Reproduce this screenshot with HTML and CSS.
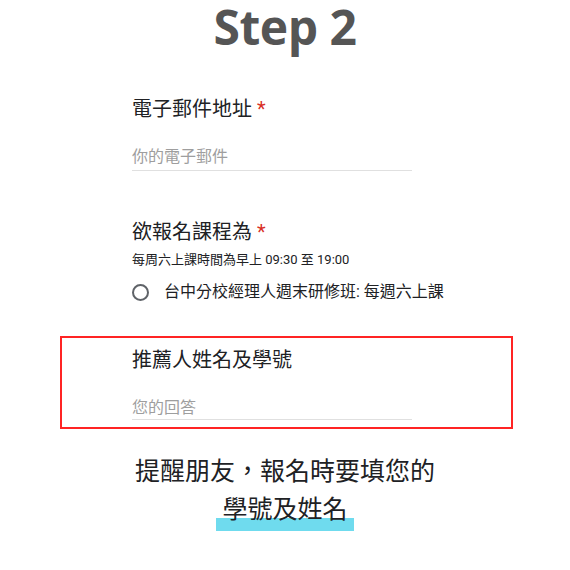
FILE: index.html
```html
<!DOCTYPE html>
<html lang="zh-Hant">
<head>
  <meta charset="UTF-8">
  <meta name="viewport" content="width=device-width, initial-scale=1.0">
  <title>Step 2</title>
  <link rel="stylesheet" href="styles.css">
</head>
<body>
  <h1 class="step">Step 2</h1>

  <div class="form">
    <div class="question q-email">
      <div class="q-title">電子郵件地址 <span class="req">*</span></div>
      <div class="answer">你的電子郵件</div>
    </div>

    <div class="question q-course">
      <div class="q-title">欲報名課程為 <span class="req">*</span></div>
      <div class="q-desc">每周六上課時間為早上 09:30 至 19:00</div>
      <label class="radio-row">
        <span class="radio"></span>
        <span class="radio-label">台中分校經理人週末研修班: 每週六上課</span>
      </label>
    </div>

    <div class="question q-ref highlight">
      <div class="q-title">推薦人姓名及學號</div>
      <div class="answer">您的回答</div>
    </div>
  </div>

  <div class="reminder">
    <div>提醒朋友，報名時要填您的</div>
    <div><span class="mark">學號及姓名</span></div>
  </div>
</body>
</html>
```

FILE: styles.css
```css
body {
  margin: 0;
  font-family: Roboto, "Noto Sans CJK TC", sans-serif;
  color: #202124;
  background: #ffffff;
}

.step {
  margin: 0;
  padding-top: 2px;
  font-family: "Open Sans", sans-serif;
  font-weight: 700;
  font-size: 48px;
  line-height: 50px;
  letter-spacing: -0.5px;
  color: #555555;
  text-align: center;
}

.form {
  padding: 0 57px 0 60px;
}

.question {
  padding-left: 72px;
}

.q-title {
  font-size: 20px;
  line-height: 24px;
}

.req {
  color: #d93025;
}

.answer {
  width: 280px;
  margin-top: 26px;
  padding-bottom: 3px;
  font-size: 16px;
  line-height: 20px;
  color: #9e9e9e;
  border-bottom: 1px solid #e0e0e0;
}

.q-email {
  margin-top: 45px;
}

.q-course {
  margin-top: 49px;
}

.q-desc {
  margin-top: 8px;
  font-size: 13px;
  line-height: 16px;
}

.radio-row {
  display: flex;
  align-items: center;
  gap: 15px;
  margin-top: 14px;
}

.radio {
  width: 13px;
  height: 13px;
  border: 2px solid #5f6368;
  border-radius: 50%;
}

.radio-label {
  font-size: 16px;
  line-height: 20px;
}

.highlight {
  margin-top: 34px;
  padding: 10px 0 7px 70px;
  border: 2px solid #ff2424;
}

.highlight .answer {
  padding-bottom: 1px;
}

.reminder {
  margin-top: 24px;
  font-size: 25px;
  line-height: 38px;
  text-align: center;
}

.mark {
  display: inline-block;
  vertical-align: top;
  padding: 0 6px 2px;
  background: linear-gradient(to bottom, transparent 27px, #6fdbee 27px);
}
```
